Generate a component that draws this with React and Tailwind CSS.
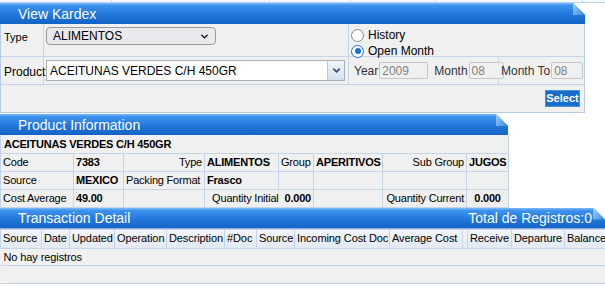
import { ChevronDown } from 'lucide-react';

const font = { fontFamily: '"Liberation Sans", Arial, sans-serif' };

function Header({ title, right }) {
  return (
    <div className="relative h-[21px]">
      <div className="h-full flex items-center justify-between pl-[18px] pr-[13px] text-white text-[14px] bg-[linear-gradient(to_bottom,#7cbaf8_0%,#3f93ee_12%,#2479de_50%,#1263c3_100%)] [clip-path:polygon(0_0,calc(100%-12px)_0,100%_12px,100%_100%,0_100%)]">
        <span className="leading-none">{title}</span>
        {right && <span className="leading-none">{right}</span>}
      </div>
      <div className="absolute right-0 top-0 w-[12px] h-[12px] bg-[linear-gradient(135deg,#a6d0f7,#3a87dc)] [clip-path:polygon(0_0,100%_100%,0_100%)]" />
    </div>
  );
}

function Radio({ checked, label }) {
  return (
    <label className="flex items-center gap-[4px] h-[16px]">
      <span
        className={`w-[13px] h-[13px] rounded-full border flex items-center justify-center bg-white ${
          checked ? 'border-[#1a6fd6] border-[1.5px]' : 'border-[#8a8a8a]'
        }`}
      >
        {checked && <span className="w-[6px] h-[6px] rounded-full bg-[#1a6fd6]" />}
      </span>
      <span>{label}</span>
    </label>
  );
}

function Field({ label, value, inputW }) {
  return (
    <div className="flex items-center h-full whitespace-nowrap">
      <span className="text-[#333] mr-[1px]">{label}</span>
      <span className={`h-[17px] ${inputW} border border-[#c6c6c6] rounded-[2px] bg-[#f0f0f0] text-[#808080] px-[2px] flex items-center`}>
        {value}
      </span>
    </div>
  );
}

const td = 'border border-[#c5d5e8] px-[2px] h-[18px] whitespace-nowrap overflow-hidden';

export default function App() {
  const cols = [
    ['Source', 41],
    ['Date', 28],
    ['Updated', 45],
    ['Operation', 52],
    ['Description', 58],
    ['#Doc', 32],
    ['Source', 38],
    ['Incoming Cost Doc', 95],
    ['Average Cost', 73],
    ['', 5],
    ['Receive', 44],
    ['Departure', 53],
    ['Balance', 41],
  ];
  const info = [73, 50, 81, 74, 35, 69, 84, 42];

  return (
    <div className="w-[605px] h-[287px] overflow-hidden bg-white text-[11px] text-black" style={font}>
      {/* top strip */}
      <div className="h-[3px] flex border-b border-[#bcd3ee] bg-[#f4f8fd]">
        <div className="w-[112px] border-r border-[#cfdcec]" />
        <div className="w-[158px] border-r border-[#cfdcec]" />
        <div className="w-[81px] border-r border-[#cfdcec]" />
        <div className="w-[85px] border-r border-[#cfdcec]" />
        <div className="w-[147px] border-r border-[#cfdcec]" />
      </div>

      {/* View Kardex */}
      <div className="w-[585px]">
        <Header title="View Kardex" />
        <div className="bg-[#f0f0f0] border-l border-r border-b border-[#b7cce4] grid grid-cols-[43px_305px_1fr]">
          <div className="h-[33px] border-r border-b border-[#c5d5e8] pl-[3px] pt-[5px]">Type</div>
          <div className="h-[33px] border-r border-b border-[#c5d5e8] pl-[2px] pt-[3px]">
            <div className="w-[170px] h-[18px] border border-[#9a9a9a] rounded-[4px] bg-[#e9e9ed] flex items-center justify-between pl-[6px] pr-[5px] text-[12px]">
              <span>ALIMENTOS</span>
              <ChevronDown size={11} strokeWidth={3} />
            </div>
          </div>
          <div className="h-[33px] border-b border-[#c5d5e8] pl-[2px] pt-[3px] text-[12px]">
            <Radio label="History" />
            <Radio checked label="Open Month" />
          </div>

          <div className="h-[28px] border-r border-b border-[#c5d5e8] pl-[3px] pt-[6px] text-[12px]">Product</div>
          <div className="h-[28px] border-r border-b border-[#c5d5e8] pl-[2px] pt-[3px]">
            <div className="w-[299px] h-[21px] border border-[#abadb3] bg-white flex items-center text-[12px]">
              <span className="flex-1 pl-[3px]">ACEITUNAS VERDES C/H 450GR</span>
              <span className="w-[17px] h-full border-l border-[#b9c9dc] bg-[linear-gradient(to_bottom,#f2f6fb,#d4e0ee)] flex items-center justify-center text-[#334a6b]">
                <ChevronDown size={11} strokeWidth={3.5} />
              </span>
            </div>
          </div>
          <div className="h-[28px] border-b border-[#c5d5e8] flex text-[12px]">
            <div className="flex items-center pl-[5px] border-r border-[#c5d5e8] w-[150px]">
              <Field label="Year" value="2009" inputW="w-[49px]" />
              <span className="ml-[6px]" />
              <Field label="Month" value="08" inputW="w-[35px]" />
            </div>
            <div className="flex items-center pl-[2px]">
              <Field label="Month To" value="08" inputW="w-[32px]" />
            </div>
          </div>

          <div className="col-span-3 h-[27px] flex items-center justify-end pr-[4px]">
            <button className="h-[17px] w-[35px] bg-[#1a6ccc] border border-[#4d8fd8] text-white font-bold text-[11px] leading-none">
              Select
            </button>
          </div>
        </div>
      </div>

      {/* Product Information */}
      <div className="w-[508px] mt-px">
        <Header title="Product Information" />
        <table className="w-[508px] table-fixed border-collapse bg-[#f0f0f0] text-[11px] tracking-[-0.2px]">
          <colgroup>
            {info.map((w, i) => (
              <col key={i} style={{ width: w }} />
            ))}
          </colgroup>
          <tbody>
            <tr>
              <td colSpan={8} className="border-l border-r border-[#c5d5e8] px-[3px] h-[18px] font-bold">
                ACEITUNAS VERDES C/H 450GR
              </td>
            </tr>
            <tr>
              <td className={td}>Code</td>
              <td className={`${td} font-bold`}>7383</td>
              <td className={`${td} text-right`}>Type</td>
              <td className={`${td} font-bold`}>ALIMENTOS</td>
              <td className={td}>Group</td>
              <td className={`${td} font-bold`}>APERITIVOS</td>
              <td className={`${td} text-right`}>Sub Group</td>
              <td className={`${td} font-bold`}>JUGOS</td>
            </tr>
            <tr>
              <td className={td}>Source</td>
              <td className={`${td} font-bold`}>MEXICO</td>
              <td className={td}>Packing Format</td>
              <td className={`${td} font-bold`}>Frasco</td>
              <td className={td}></td>
              <td className={td}></td>
              <td className={td}></td>
              <td className={td}></td>
            </tr>
            <tr>
              <td className={td}>Cost Average</td>
              <td className={`${td} font-bold`}>49.00</td>
              <td className={td}></td>
              <td colSpan={2} className={`${td} text-right`}>
                Quantity Initial <b className="ml-[3px]">0.000</b>
              </td>
              <td className={td}></td>
              <td className={`${td} text-right`}>Quantity Current</td>
              <td className={`${td} font-bold text-center`}>0.000</td>
            </tr>
          </tbody>
        </table>
      </div>

      {/* Transaction Detail */}
      <div className="w-[605px]">
        <Header title="Transaction Detail" right="Total de Registros:0" />
        <table className="border-collapse bg-[#f0f0f0] text-[11px] table-fixed w-[605px] tracking-[-0.1px]">
          <colgroup>
            {cols.map(([, w], i) => (
              <col key={i} style={{ width: w }} />
            ))}
          </colgroup>
          <thead>
            <tr className="bg-[linear-gradient(to_bottom,#f3f6fa,#e2e9f2)]">
              {cols.map(([c], i) => (
                <th key={i} className="border border-[#c5d5e8] px-[2px] h-[19px] font-normal text-left whitespace-nowrap">
                  {c}
                </th>
              ))}
            </tr>
          </thead>
          <tbody>
            <tr>
              <td colSpan={13} className="border-b border-[#c5d5e8] px-[3px] h-[17px]">No hay registros</td>
            </tr>
            <tr>
              <td colSpan={13} className="border-b border-[#c5d5e8] h-[18px]"></td>
            </tr>
          </tbody>
        </table>
      </div>
    </div>
  );
}
